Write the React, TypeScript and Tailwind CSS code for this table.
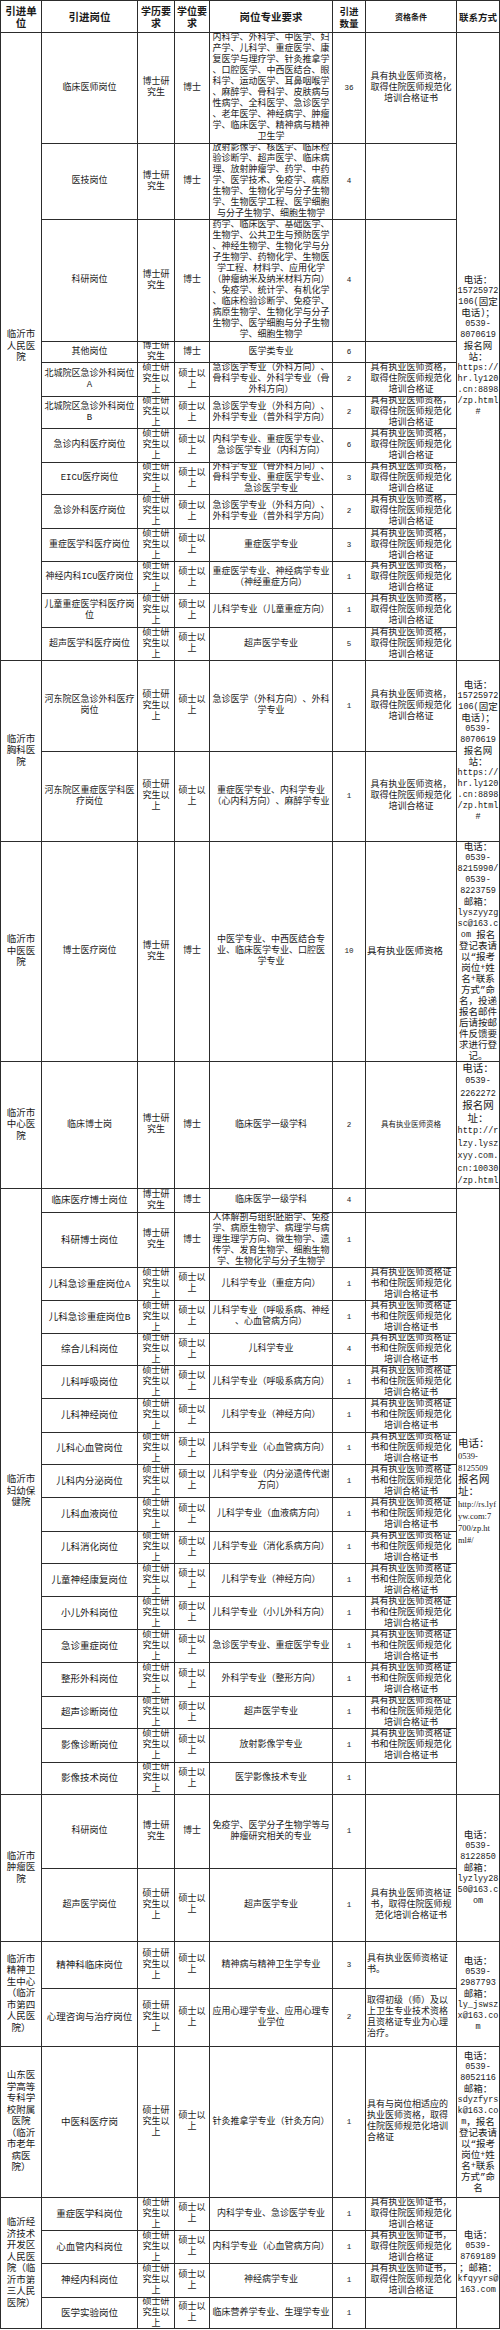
import React from 'react';

type Row = { pos: string; edu: string; deg: string; major: string; n: string; qual: string; qualLeft?: boolean; qualCls?: string };
type CVKey = 'mono' | 'big' | 'serif';
type Group = { unit: string; contact: string; cv: CVKey; span: string; posCls?: string; rows: Row[] };

const EM = '硕士研\n究生以\n上';
const DM = '硕士以\n上';
const ED = '博士研\n究生';
const DD = '博士';
const Q1 = '具有执业医师资格，\n取得住院医师规范化\n培训合格证';
const Q5 = '具有执业医师资格证\n书和住院医师规范化\n培训合格证书';
const Q9 = '具有执业医师证书，\n取得住院医师规范化\n培训合格证';

const m = (pos: string, major: string, n: string, qual: string, extra: Partial<Row> = {}): Row => ({ pos, edu: EM, deg: DM, major, n, qual, ...extra });
const d = (pos: string, major: string, n: string, qual: string, extra: Partial<Row> = {}): Row => ({ pos, edu: ED, deg: DD, major, n, qual, ...extra });

const groups: Group[] = [
  {
    unit: '临沂市\n人民医\n院',
    span: 'row-span-13',
    cv: 'mono',
    contact: '电话：\n15725972\n106(固定\n电话)；\n0539-\n8070619\n报名网\n站：\nhttps://\nhr.ly120\n.cn:8898\n/zp.html\n#',
    rows: [
      d('临床医师岗位', '内科学、外科学、中医学、妇\n产学、儿科学、重症医学、康\n复医学与理疗学、针灸推拿学\n、口腔医学、中西医结合、眼\n科学、运动医学、耳鼻咽喉学\n、麻醉学、骨科学、皮肤病与\n性病学、全科医学、急诊医学\n、老年医学、神经病学、肿瘤\n学、临床医学、精神病与精神\n卫生学', '36', '具有执业医师资格，\n取得住院医师规范化\n培训合格证书'),
      d('医技岗位', '放射影像学、核医学、临床检\n验诊断学、超声医学、临床病\n理、放射肿瘤学、药学、中药\n学、医学技术、免疫学、病原\n生物学、生物化学与分子生物\n学、生物医学工程、医学细胞\n与分子生物学、细胞生物学', '4', ''),
      d('科研岗位', '药学、临床医学、基础医学、\n生物学、公共卫生与预防医学\n、神经生物学、生物化学与分\n子生物学、药物化学、生物医\n学工程、材料学、应用化学\n（肿瘤纳米及纳米材料方向）\n、免疫学、统计学、有机化学\n、临床检验诊断学、免疫学、\n病原生物学、生物化学与分子\n生物学、医学细胞与分子生物\n学、细胞生物学', '4', ''),
      d('其他岗位', '医学类专业', '6', ''),
      m('北城院区急诊外科岗位\nA', '急诊医学专业（外科方向）、\n骨科学专业、外科学专业（骨\n外科方向）', '2', Q1),
      m('北城院区急诊外科岗位\nB', '急诊医学专业（外科方向）、\n外科学专业（普外科学方向）', '2', Q1),
      m('急诊内科医疗岗位', '内科学专业、重症医学专业、\n急诊医学专业（内科方向）', '6', Q1),
      m('EICU医疗岗位', '外科学专业（骨外科方向）、\n骨科学专业、重症医学专业、\n急诊医学专业', '3', Q1),
      m('急诊外科医疗岗位', '急诊医学专业（外科方向）、\n外科学专业（普外科学方向）', '2', Q1),
      m('重症医学科医疗岗位', '重症医学专业', '3', Q1),
      m('神经内科ICU医疗岗位', '重症医学专业、神经病学专业\n（神经重症方向）', '1', Q1),
      m('儿童重症医学科医疗岗\n位', '儿科学专业（儿童重症方向）', '1', Q1),
      m('超声医学科医疗岗位', '超声医学专业', '5', Q1),
    ],
  },
  {
    unit: '临沂市\n胸科医\n院',
    span: 'row-span-2',
    cv: 'mono',
    contact: '电话：\n15725972\n106(固定\n电话)；\n0539-\n8070619\n报名网\n站：\nhttps://\nhr.ly120\n.cn:8898\n/zp.html\n#',
    rows: [
      m('河东院区急诊外科医疗\n岗位', '急诊医学（外科方向）、外科\n学专业', '1', Q1),
      m('河东院区重症医学科医\n疗岗位', '重症医学专业、内科学专业\n（心内科方向）、麻醉学专业', '1', Q1),
    ],
  },
  {
    unit: '临沂市\n中医医\n院',
    span: 'row-span-1',
    cv: 'mono',
    contact: '电话：\n0539-\n8215990/\n0539-\n8223759\n邮箱：\nlyszyyzg\nsc@163.c\nom 报名\n登记表请\n以“报考\n岗位+姓\n名+联系\n方式”命\n名，投递\n报名邮件\n后请按邮\n件反馈要\n求进行登\n记。',
    rows: [
      d('博士医疗岗位', '中医学专业、中西医结合专\n业、临床医学专业、口腔医\n学专业', '10', '具有执业医师资格', { qualLeft: true, qualCls: 'text-[9.5px]' }),
    ],
  },
  {
    unit: '临沂市\n中心医\n院',
    span: 'row-span-1',
    cv: 'big',
    contact: '电话：\n0539-\n2262272\n报名网\n址：\nhttp://r\nlzy.lysz\nxyy.com.\ncn:10030\n/zp.html',
    rows: [d('临床博士岗', '临床医学一级学科', '2', '具有执业医师资格', { qualCls: 'text-[7.5px]' })],
  },
  {
    unit: '临沂市\n妇幼保\n健院',
    span: 'row-span-18',
    cv: 'serif',
    posCls: 'text-[9.5px]',
    contact: '电话：\n0539-\n8125509\n报名网\n址：\nhttp://rs.lyf\nyw.com:7\n700/zp.ht\nml#/',
    rows: [
      d('临床医疗博士岗位', '临床医学一级学科', '4', ''),
      d('科研博士岗位', '人体解剖与组织胚胎学、免疫\n学、病原生物学、病理学与病\n理生理学方向、微生物学、遗\n传学、发育生物学、细胞生物\n学、生物化学与分子生物学', '1', ''),
      m('儿科急诊重症岗位A', '儿科学专业（重症方向）', '1', Q5),
      m('儿科急诊重症岗位B', '儿科学专业（呼吸系病、神经\n、心血管病方向）', '1', Q5),
      m('综合儿科岗位', '儿科学专业', '4', Q5),
      m('儿科呼吸岗位', '儿科学专业（呼吸系病方向）', '1', Q5),
      m('儿科神经岗位', '儿科学专业（神经方向）', '1', Q5),
      m('儿科心血管岗位', '儿科学专业（心血管病方向）', '1', Q5),
      m('儿科内分泌岗位', '儿科学专业（内分泌遗传代谢\n方向）', '1', Q5),
      m('儿科血液岗位', '儿科学专业（血液病方向）', '1', Q5),
      m('儿科消化岗位', '儿科学专业（消化系病方向）', '1', Q5),
      m('儿童神经康复岗位', '儿科学专业（神经方向）', '1', Q5),
      m('小儿外科岗位', '儿科学专业（小儿外科方向）', '1', Q5),
      m('急诊重症岗位', '急诊医学专业、重症医学专业', '1', Q5),
      m('整形外科岗位', '外科学专业（整形方向）', '1', Q5),
      m('超声诊断岗位', '超声医学专业', '1', Q5),
      m('影像诊断岗位', '放射影像学专业', '1', Q5),
      m('影像技术岗位', '医学影像技术专业', '1', ''),
    ],
  },
  {
    unit: '临沂市\n肿瘤医\n院',
    span: 'row-span-2',
    cv: 'mono',
    contact: '电话：\n0539-\n8122850\n邮箱：\nlyzlyy28\n50@163.c\nom',
    rows: [
      d('科研岗位', '免疫学、医学分子生物学等与\n肿瘤研究相关的专业', '1', ''),
      m('超声医学岗位', '超声医学专业', '1', '具有执业医师资格证\n书，取得住院医师规\n范化培训合格证书'),
    ],
  },
  {
    unit: '临沂市\n精神卫\n生中心\n（临沂\n市第四\n人民医\n院）',
    span: 'row-span-2',
    cv: 'mono',
    posCls: 'text-[9.5px]',
    contact: '电话：\n0539-\n2987793\n邮箱：\nly_jswsz\nx@163.co\nm',
    rows: [
      m('精神科临床岗位', '精神病与精神卫生学专业', '3', '具有执业医师资格证\n书。', { qualLeft: true }),
      m('心理咨询与治疗岗位', '应用心理学专业、应用心理专\n业学位', '2', '取得初级（师）及以\n上卫生专业技术资格\n且资格证专业为心理\n治疗。', { qualLeft: true }),
    ],
  },
  {
    unit: '山东医\n学高等\n专科学\n校附属\n医院\n（临沂\n市老年\n病医\n院）',
    span: 'row-span-1',
    cv: 'mono',
    posCls: 'text-[9.5px]',
    contact: '电话：\n0539-\n8052116\n邮箱：\nsdyzfyrs\nk@163.co\nm，报名\n登记表请\n以“报考\n岗位+姓\n名+联系\n方式”命\n名',
    rows: [
      m('中医科医疗岗', '针灸推拿学专业（针灸方向）', '1', '具有与岗位相适应的\n执业医师资格，取得\n住院医师规范化培训\n合格证', { qualLeft: true }),
    ],
  },
  {
    unit: '临沂经\n济技术\n开发区\n人民医\n院（临\n沂市第\n三人民\n医院）',
    span: 'row-span-4',
    cv: 'mono',
    posCls: 'text-[9.5px]',
    contact: '电话：\n0539-\n8769189\n；邮箱：\nkfqyyrs@\n163.com',
    rows: [
      m('重症医学科岗位', '内科学专业、急诊医学专业', '1', Q9),
      m('心血管内科岗位', '内科学专业（心血管病方向）', '1', Q9),
      m('神经内科岗位', '神经病学专业', '1', Q9),
      m('医学实验岗位', '临床营养学专业、生理学专业', '1', ''),
    ],
  },
];

const CV: Record<CVKey, { line: string; cell: string; a: string; c: string }> = {
  mono: {
    line: 'h-[11px] leading-[11px] justify-center',
    cell: 'justify-center',
    a: "[font-family:'Liberation_Mono',monospace] text-[8.5px]",
    c: 'text-[9.5px]',
  },
  big: {
    line: 'h-[12.5px] leading-[12.5px] justify-center',
    cell: 'justify-center',
    a: "[font-family:'Liberation_Mono',monospace] text-[8.5px]",
    c: 'text-[10.5px]',
  },
  serif: {
    line: 'h-[12px] leading-[12px] justify-start pl-px',
    cell: 'justify-start',
    a: "[font-family:'Liberation_Serif',serif] text-[8.5px]",
    c: 'text-[10.5px]',
  },
};

function Rich({ text, v }: { text: string; v: CVKey }) {
  const cfg = CV[v];
  return (
    <div className="flex w-full flex-col">
      {text.split('\n').map((ln, i) => (
        <div key={i} className={`flex items-center whitespace-pre ${cfg.line}`}>
          {ln
            .split(/([\x00-\x7F]+)/)
            .filter((s) => s.length > 0)
            .map((seg, j) =>
              /^[\x00-\x7F]+$/.test(seg) ? (
                <span key={j} className={`whitespace-pre ${cfg.a}`}>
                  {seg}
                </span>
              ) : (
                <span key={j} className={`whitespace-pre ${cfg.c}`}>
                  {seg}
                </span>
              )
            )}
        </div>
      ))}
    </div>
  );
}

const cell = 'bg-white overflow-hidden flex items-center min-w-0 min-h-0';
const head = "text-center font-bold leading-[12px] [font-family:'Noto_Sans_CJK_SC',sans-serif]";

function T({ t, cls = '' }: { t: string; cls?: string }) {
  return <div className={`whitespace-pre ${cls}`}>{t}</div>;
}

export default function App() {
  return (
    <div className="w-[500px] bg-white text-[#1a1a1a] [text-spacing-trim:space-all] [font-family:'Liberation_Mono','Noto_Sans_CJK_SC',monospace]">
      <div className="grid w-[500px] gap-px p-px bg-[#2c2c2c] grid-cols-[40px_95px_36px_34px_122px_32px_90px_42px] grid-rows-[31px_110px_75px_121px_20px_33px_31px_33px_31px_33px_32px_31px_33px_32px_90px_89px_219px_126px_23px_54px_32px_32px_31px_32px_33px_31px_32px_33px_31px_32px_32px_32px_33px_31px_33px_31px_73px_72px_46px_57px_150px_32px_32px_33px_30px]">
        <div className={`${cell} col-start-1 justify-center`}>
          <T t={'引进单\n位'} cls={`${head} text-[10.5px]`} />
        </div>
        <div className={`${cell} col-start-2 justify-center`}>
          <T t="引进岗位" cls={`${head} text-[10.5px]`} />
        </div>
        <div className={`${cell} col-start-3 justify-center`}>
          <T t={'学历要\n求'} cls={`${head} text-[10px]`} />
        </div>
        <div className={`${cell} col-start-4 justify-center`}>
          <T t={'学位要\n求'} cls={`${head} text-[10px]`} />
        </div>
        <div className={`${cell} col-start-5 justify-center`}>
          <T t="岗位专业要求" cls={`${head} text-[10.5px]`} />
        </div>
        <div className={`${cell} col-start-6 justify-center`}>
          <T t={'引进\n数量'} cls={`${head} text-[9.5px]`} />
        </div>
        <div className={`${cell} col-start-7 justify-center`}>
          <T t="资格条件" cls={`${head} text-[8px]`} />
        </div>
        <div className={`${cell} col-start-8 justify-center`}>
          <T t="联系方式" cls={`${head} text-[9.5px]`} />
        </div>

        {groups.map((g, gi) => (
          <React.Fragment key={gi}>
            {g.rows.map((r, ri) => (
              <React.Fragment key={ri}>
                {ri === 0 && (
                  <div className={`${cell} col-start-1 justify-center ${g.span}`}>
                    <T t={g.unit} cls="text-center text-[9.5px] leading-[11.5px]" />
                  </div>
                )}
                <div className={`${cell} col-start-2 justify-center`}>
                  <T t={r.pos} cls={`text-center leading-[11px] ${g.posCls ?? 'text-[9px]'}`} />
                </div>
                <div className={`${cell} col-start-3 justify-center`}>
                  <T t={r.edu} cls="text-center text-[9px] leading-[11px]" />
                </div>
                <div className={`${cell} col-start-4 justify-center`}>
                  <T t={r.deg} cls="text-center text-[9px] leading-[11px]" />
                </div>
                <div className={`${cell} col-start-5 justify-center`}>
                  <T t={r.major} cls="text-center text-[9px] leading-[11px]" />
                </div>
                <div className={`${cell} col-start-6 justify-center`}>
                  <T t={r.n} cls="text-center text-[7.5px] leading-[11px]" />
                </div>
                <div className={`${cell} col-start-7 ${r.qualLeft ? 'justify-start pl-px' : 'justify-center'}`}>
                  <T t={r.qual} cls={`${r.qualLeft ? 'text-left' : 'text-center'} leading-[11px] ${r.qualCls ?? 'text-[9px]'}`} />
                </div>
                {ri === 0 && (
                  <div className={`${cell} col-start-8 ${g.span} ${CV[g.cv].cell}`}>
                    <Rich text={g.contact} v={g.cv} />
                  </div>
                )}
              </React.Fragment>
            ))}
          </React.Fragment>
        ))}
      </div>
    </div>
  );
}
